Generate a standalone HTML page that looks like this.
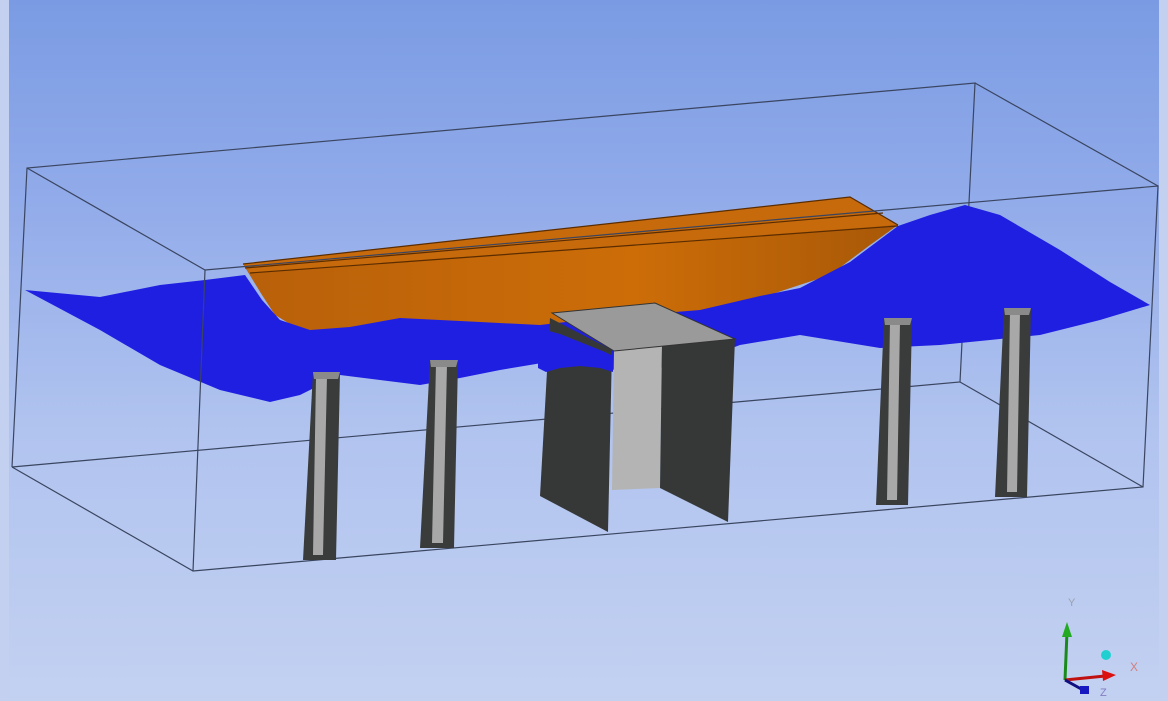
<!DOCTYPE html>
<html><head><meta charset="utf-8"><style>
html,body{margin:0;padding:0;width:1168px;height:701px;overflow:hidden;background:#c3d0ef;}
.bg{position:absolute;left:9px;top:0;width:1150px;height:701px;background:linear-gradient(#7a9be3 0%,#93acea 30%,#b0c3ef 60%,#c3d1f1 100%);}
svg{position:absolute;left:0;top:0;}
</style></head><body>
<div class="bg"></div>
<svg width="1168" height="701" viewBox="0 0 1168 701">
<defs>
<linearGradient id="hull" x1="0" y1="0" x2="1" y2="0">
<stop offset="0" stop-color="#b8600a"/><stop offset="0.6" stop-color="#cc6d08"/><stop offset="1" stop-color="#a85808"/>
</linearGradient>
</defs>
<g stroke="#3a4560" stroke-width="1.2" fill="none">
<polyline points="12,467 27,168 975,83 960,382 12,467"/>
<line x1="975" y1="83" x2="1158" y2="186"/>
<line x1="960" y1="382" x2="1143" y2="487"/>
</g>
<polygon points="243,264 850,197 898,225 870,245 830,275 760,298 700,312 600,322 520,332 400,330 300,330 275,315 262,295" fill="url(#hull)"/>
<polygon points="243,264 850,197 898,225 250,273" fill="#c66a0c"/>
<g stroke="#5a2c00" stroke-width="1.2" fill="none">
<polyline points="243,264 850,197 898,225"/>
<line x1="245" y1="268" x2="883" y2="213"/>
<line x1="250" y1="273" x2="898" y2="226"/>
</g>
<polygon fill="#1f1fe2" points="25,290 100,297 160,285 205,280 245,275 262,300 280,320 310,330 350,327 400,318 440,320 480,322 540,325 600,318 700,310 760,296 800,288 850,262 898,226 930,215 965,205 1000,215 1060,250 1110,282 1150,305 1100,320 1040,335 990,340 940,345 880,348 800,335 740,345 700,360 660,368 615,370 560,360 500,370 460,378 420,385 380,380 340,375 300,395 270,402 220,390 160,365 100,330"/>
<g stroke="#3a4560" stroke-width="1.2" fill="none">
<polyline points="12,467 193,571 1143,487 1158,186 205,270 27,168"/>
<line x1="193" y1="571" x2="205" y2="270"/>
</g>
<g>
<polygon points="313,372 340,372 336,560 303,560" fill="#3a3c3c"/>
<polygon points="316,376 327,376 323,555 313,555" fill="#a8a8a8"/>
<polygon points="313,372 340,372 338,379 314,379" fill="#8a8a8a"/>
<polygon points="430,360 458,360 454,548 420,548" fill="#3a3c3c"/>
<polygon points="436,364 447,364 443,543 432,543" fill="#a8a8a8"/>
<polygon points="430,360 458,360 456,367 431,367" fill="#8a8a8a"/>
<polygon points="884,318 912,318 908,505 876,505" fill="#3a3c3c"/>
<polygon points="890,322 900,322 897,500 887,500" fill="#a8a8a8"/>
<polygon points="884,318 912,318 910,325 885,325" fill="#8a8a8a"/>
<polygon points="1004,308 1031,308 1027,497 995,497" fill="#3a3c3c"/>
<polygon points="1010,312 1020,312 1017,492 1007,492" fill="#a8a8a8"/>
<polygon points="1004,308 1031,308 1029,315 1005,315" fill="#8a8a8a"/>
</g>
<polygon points="550,318 612,350 608,532 540,496" fill="#363838"/>
<polygon points="614,350 662,346 660,488 612,490" fill="#b4b4b4"/>
<polygon points="662,346 735,338 728,522 660,488" fill="#363838"/>
<polygon points="552,313 655,303 735,339 614,351" fill="#9a9a9a" stroke="#333" stroke-width="1"/>
<polygon fill="#1f1fe2" points="538,328 560,334 585,344 605,352 613,356 613,372 600,368 580,366 560,368 546,372 538,368"/>
<g>
<text x="1068" y="606" font-family="Liberation Sans,sans-serif" font-size="11" fill="#9aa0b0">Y</text>
<line x1="1065" y1="680" x2="1067" y2="632" stroke="#1a8a1a" stroke-width="3"/>
<polygon points="1067,622 1062,637 1072,637" fill="#22aa22"/>
<line x1="1065" y1="680" x2="1105" y2="676" stroke="#c01010" stroke-width="3"/>
<polygon points="1116,675 1102,670 1103,681" fill="#dd1010"/>
<line x1="1065" y1="680" x2="1083" y2="690" stroke="#101080" stroke-width="3"/>
<rect x="1080" y="686" width="9" height="8" fill="#1818c0"/>
<circle cx="1106" cy="655" r="5" fill="#20d0d0"/>
<text x="1130" y="671" font-family="Liberation Sans,sans-serif" font-size="12" fill="#d08080">X</text>
<text x="1100" y="696" font-family="Liberation Sans,sans-serif" font-size="11" fill="#8080c0">Z</text>
</g>
</svg>
</body></html>
